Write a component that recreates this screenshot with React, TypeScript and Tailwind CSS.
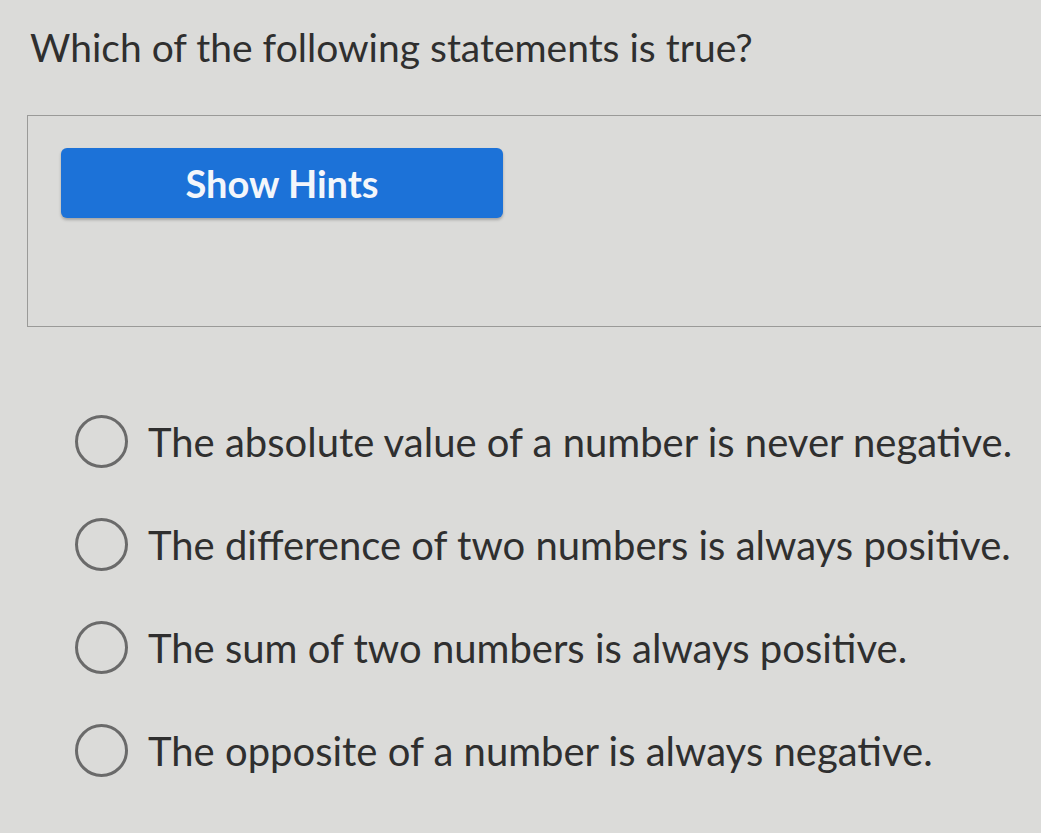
import { useState } from "react";

const options = [
  "The absolute value of a number is never negative.",
  "The difference of two numbers is always positive.",
  "The sum of two numbers is always positive.",
  "The opposite of a number is always negative.",
];

export default function App() {
  const [picked, setPicked] = useState<number | null>(null);

  return (
    <div
      className="w-[1041px] h-[833px] overflow-hidden bg-[#dbdbd9] text-[#2f2f2f]"
      style={{ fontFamily: "Lato, 'Noto Sans', sans-serif" }}
    >
      <h1 className="pl-[30px] pt-[22px] text-[39px] leading-[50px] font-normal">
        Which of the following statements is true?
      </h1>

      <div className="ml-[27px] mt-[43px] -mr-[20px] h-[212px] border border-[#9a9a98] pl-[33px] pt-[32px]">
        <button
          type="button"
          className="flex h-[70px] w-[442px] items-center justify-center rounded-[6px] bg-[#1c72d8] text-[38px] font-bold text-[#f3f6fb] shadow-[0_2px_3px_rgba(0,0,0,0.25)]"
        >
          Show Hints
        </button>
      </div>

      <ul className="mt-[88px] flex flex-col gap-[50px] pl-[75px]">
        {options.map((o, i) => (
          <li key={o}>
            <button
              type="button"
              onClick={() => setPicked(i)}
              className="flex items-center gap-[20px] text-left"
            >
              <span className="flex h-[53px] w-[53px] shrink-0 items-center justify-center rounded-full border-[3px] border-[#6a6a6a]">
                {picked === i && <span className="h-[26px] w-[26px] rounded-full bg-[#1c72d8]" />}
              </span>
              <span className="text-[40px] leading-[50px]">{o}</span>
            </button>
          </li>
        ))}
      </ul>
    </div>
  );
}
